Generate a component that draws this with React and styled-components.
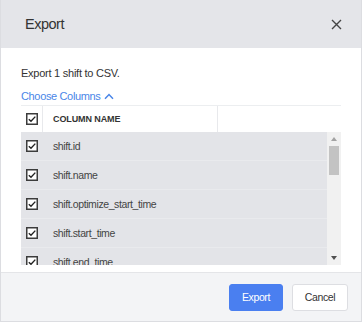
import React from 'react';
import styled, { createGlobalStyle } from 'styled-components';

const GlobalStyle = createGlobalStyle`
  html, body {
    margin: 0;
    padding: 0;
    background: #ffffff;
  }
  body {
    font-family: "Liberation Sans", Arial, sans-serif;
  }
  * {
    box-sizing: border-box;
  }
`;

export const Dialog = styled.div`
  width: 362px;
  height: 322px;
  display: flex;
  flex-direction: column;
  border: 1px solid #dcdde1;
  border-top: none;
  background: #ffffff;
`;

export const Header = styled.div`
  height: 48px;
  flex: none;
  display: flex;
  align-items: center;
  justify-content: space-between;
  padding: 0 18px 0 24px;
  background: #e4e5e9;
`;

export const Title = styled.h2`
  margin: 0;
  font-size: 14.5px;
  letter-spacing: -0.5px;
  font-weight: normal;
  color: #333333;
`;

export const CloseButton = styled.button`
  border: none;
  background: transparent;
  padding: 0;
  width: 14px;
  height: 14px;
  display: flex;
  align-items: center;
  justify-content: center;
  cursor: pointer;
`;

export const Body = styled.div`
  flex: 1;
  padding: 18px 20px 0 20px;
  display: flex;
  flex-direction: column;
`;

export const Intro = styled.p`
  margin: 0;
  font-size: 11px;
  letter-spacing: -0.25px;
  line-height: 14px;
  color: #333333;
`;

export const Toggle = styled.button`
  margin-top: 9px;
  padding: 0;
  border: none;
  background: transparent;
  display: flex;
  align-items: center;
  gap: 4px;
  font-family: inherit;
  font-size: 11px;
  letter-spacing: -0.35px;
  line-height: 14px;
  color: #4a86e8;
  cursor: pointer;
`;

export const Table = styled.div`
  margin-top: 2px;
  width: 320px;
  border-top: 1px solid #eceef0;
`;

export const HeadRow = styled.div`
  height: 26px;
  display: grid;
  grid-template-columns: 22px 175px 1fr;
  background: #ffffff;
`;

export const HeadCell = styled.div`
  display: flex;
  align-items: center;
  padding-left: ${({ $pad }) => $pad || 0}px;
  justify-content: ${({ $center }) => ($center ? 'center' : 'flex-start')};
  border-right: ${({ $divider }) => ($divider ? '1px solid #e8e9ec' : 'none')};
  font-size: 9px;
  font-weight: bold;
  letter-spacing: -0.1px;
  text-transform: uppercase;
  color: #333333;
`;

export const Scroller = styled.div`
  height: 133px;
  display: flex;
  overflow: hidden;
`;

export const Rows = styled.div`
  flex: 1;
  display: flex;
  flex-direction: column;
  background: #e3e4e8;
`;

export const Row = styled.div`
  height: 29px;
  flex: none;
  display: grid;
  grid-template-columns: 22px 1fr;
  border-bottom: 1px solid #e9eaed;
`;

export const Cell = styled.div`
  display: flex;
  align-items: center;
  justify-content: ${({ $center }) => ($center ? 'center' : 'flex-start')};
  padding-left: ${({ $pad }) => $pad || 0}px;
  font-size: 10.5px;
  letter-spacing: -0.4px;
  color: #444444;
`;

export const Track = styled.div`
  width: 14px;
  flex: none;
  background: #f1f1f1;
  display: flex;
  flex-direction: column;
  align-items: center;
`;

export const Arrow = styled.div`
  height: 14px;
  width: 100%;
  display: flex;
  align-items: center;
  justify-content: center;
  margin-top: ${({ $bottom }) => ($bottom ? 'auto' : '0')};
`;

export const Thumb = styled.div`
  width: 10px;
  height: 29px;
  background: #c3c3c3;
`;

export const Footer = styled.div`
  height: 49px;
  flex: none;
  margin-top: 7px;
  display: flex;
  align-items: center;
  justify-content: flex-end;
  gap: 9px;
  padding: 0 13px 0 0;
  background: #f3f4f6;
  border-top: 1px solid #e4e5e8;
`;

export const Button = styled.button`
  height: 27px;
  width: ${({ $primary }) => ($primary ? 54 : 56)}px;
  padding: 0;
  border-radius: 3px;
  font-family: inherit;
  font-size: 10.5px;
  letter-spacing: -0.4px;
  border: 1px solid ${({ $primary }) => ($primary ? '#4a7ff0' : '#dddee2')};
  background: ${({ $primary }) => ($primary ? '#4a7ff0' : '#ffffff')};
  color: ${({ $primary }) => ($primary ? '#ffffff' : '#333333')};
  cursor: pointer;
`;

const Check = () => (
  <svg width="12" height="12" viewBox="0 0 12 12">
    <rect x="0.75" y="0.75" width="10.5" height="10.5" fill="#ffffff" stroke="#3c3c3c" strokeWidth="1.5" />
    <path d="M2.8 6.2 L5 8.3 L9.3 3.6" fill="none" stroke="#222222" strokeWidth="1.4" />
  </svg>
);

const columns = [
  'shift.id',
  'shift.name',
  'shift.optimize_start_time',
  'shift.start_time',
  'shift.end_time',
];

export default function App() {
  return (
    <>
      <GlobalStyle />
      <Dialog>
        <Header>
          <Title>Export</Title>
          <CloseButton aria-label="Close">
            <svg width="11" height="11" viewBox="0 0 11 11">
              <path d="M1 1 L10 10 M10 1 L1 10" stroke="#444444" strokeWidth="1.4" />
            </svg>
          </CloseButton>
        </Header>
        <Body>
          <Intro>Export 1 shift to CSV.</Intro>
          <Toggle>
            Choose Columns
            <svg width="10" height="7" viewBox="0 0 10 7">
              <path d="M1 5.8 L5 1.6 L9 5.8" fill="none" stroke="#4a86e8" strokeWidth="1.5" />
            </svg>
          </Toggle>
          <Table>
            <HeadRow>
              <HeadCell $center $divider>
                <Check />
              </HeadCell>
              <HeadCell $pad={10} $divider>Column Name</HeadCell>
              <HeadCell />
            </HeadRow>
            <Scroller>
              <Rows>
                {columns.map((c) => (
                  <Row key={c}>
                    <Cell $center>
                      <Check />
                    </Cell>
                    <Cell $pad={10}>{c}</Cell>
                  </Row>
                ))}
              </Rows>
              <Track>
                <Arrow>
                  <svg width="6" height="4" viewBox="0 0 6 4">
                    <path d="M0 4 L3 0 L6 4 Z" fill="#a3a3a3" />
                  </svg>
                </Arrow>
                <Thumb />
                <Arrow $bottom>
                  <svg width="6" height="4" viewBox="0 0 6 4">
                    <path d="M0 0 L6 0 L3 4 Z" fill="#505050" />
                  </svg>
                </Arrow>
              </Track>
            </Scroller>
          </Table>
        </Body>
        <Footer>
          <Button $primary>Export</Button>
          <Button>Cancel</Button>
        </Footer>
      </Dialog>
    </>
  );
}
